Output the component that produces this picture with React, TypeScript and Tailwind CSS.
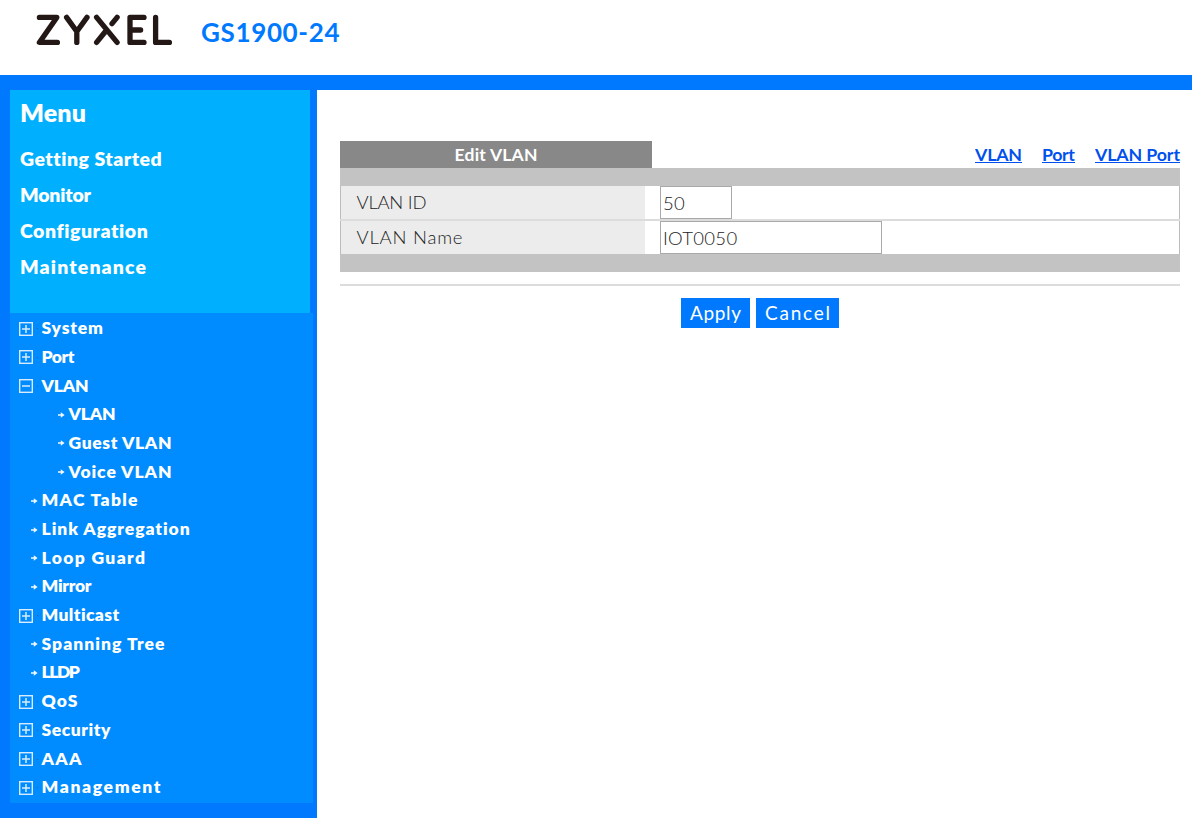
import { useLayoutEffect, useRef, useState } from "react";

type FitTextProps = { text: string; width: number; className?: string };

// Spreads the letters of a label evenly over the given width.
function FitText({ text, width, className = "" }: FitTextProps) {
  const ref = useRef<HTMLSpanElement>(null);
  const [spacing, setSpacing] = useState(0);
  useLayoutEffect(() => {
    const el = ref.current;
    if (!el) return;
    el.style.letterSpacing = "0px";
    const natural = el.getBoundingClientRect().width;
    const next = (width - natural) / Math.max(1, text.length - 1);
    el.style.letterSpacing = `${next}px`;
    setSpacing(next);
  }, [text, width]);
  return (
    <span className={`block shrink-0 whitespace-nowrap ${className}`} style={{ width }}>
      <span ref={ref} className="inline-block" style={{ letterSpacing: spacing }}>
        {text}
      </span>
    </span>
  );
}

function Logo() {
  return (
    <svg
      className="h-[44px] w-[150px]"
      viewBox="30 8 150 44"
      fill="none"
      stroke="#231815"
      strokeWidth="5.3"
      strokeLinecap="round"
      strokeLinejoin="round"
      role="img"
      aria-label="ZYXEL"
    >
      <path d="M39.4 17.4H56.8L39.4 42.4H57.4" />
      <path d="M66.6 17.4L76.8 31.5V42.4M87 17.4L76.8 31.5" />
      <path d="M96.6 17.4L117.1 42.4M96.6 42.4L105 32M117.1 17.4L112 23.6" />
      <path d="M144 17.4H130V42.4H144M130 30H140.6" />
      <path d="M155.6 17.4V42.4H169.4" />
    </svg>
  );
}

function Toggle({ open }: { open?: boolean }) {
  return (
    <svg className="size-[14px] shrink-0" viewBox="0 0 14 14" fill="none" stroke="#d6ecff">
      <rect x="0.7" y="0.7" width="12.6" height="12.6" strokeWidth="1.4" />
      <path d={open ? "M3 7H11" : "M3 7H11M7 3V11"} strokeWidth="1.5" />
    </svg>
  );
}

function Arrow() {
  return (
    <svg className="h-[6px] w-[7px] shrink-0" viewBox="0 0 7 6">
      <path d="M0 2.2H2.8V0.2L6.6 3L2.8 5.8V3.8H0Z" fill="#f0f8ff" />
    </svg>
  );
}

const sections = [
  { text: "Getting Started", width: 141 },
  { text: "Monitor", width: 71 },
  { text: "Configuration", width: 128 },
  { text: "Maintenance", width: 126 },
];

type Kind = "closed" | "open" | "leaf" | "sub";
const items: { text: string; width: number; kind: Kind }[] = [
  { text: "System", width: 61.5, kind: "closed" },
  { text: "Port", width: 33, kind: "closed" },
  { text: "VLAN", width: 47, kind: "open" },
  { text: "VLAN", width: 47, kind: "sub" },
  { text: "Guest VLAN", width: 103, kind: "sub" },
  { text: "Voice VLAN", width: 103, kind: "sub" },
  { text: "MAC Table", width: 96, kind: "leaf" },
  { text: "Link Aggregation", width: 148.5, kind: "leaf" },
  { text: "Loop Guard", width: 103.5, kind: "leaf" },
  { text: "Mirror", width: 50, kind: "leaf" },
  { text: "Multicast", width: 78, kind: "closed" },
  { text: "Spanning Tree", width: 123, kind: "leaf" },
  { text: "LLDP", width: 38.5, kind: "leaf" },
  { text: "QoS", width: 36, kind: "closed" },
  { text: "Security", width: 69, kind: "closed" },
  { text: "AAA", width: 40, kind: "closed" },
  { text: "Management", width: 119, kind: "closed" },
];

function TreeItem({ text, width, kind }: { text: string; width: number; kind: Kind }) {
  const branch = kind === "closed" || kind === "open";
  return (
    <li className="flex h-[28.7px] items-center">
      {branch ? (
        <span className="flex w-[31.5px] items-center gap-[4px] pl-[9px]">
          <Toggle open={kind === "open"} />
          <span className="size-px bg-[#2b68ad]" />
        </span>
      ) : (
        <span className={kind === "sub" ? "w-[58.5px] pl-[48px]" : "w-[31.5px] pl-[20.5px]"}>
          <Arrow />
        </span>
      )}
      <FitText text={text} width={width} className="h-[29px] text-[17.5px] leading-[28px] font-extrabold" />
    </li>
  );
}

const links = [
  { text: "VLAN", width: 47 },
  { text: "Port", width: 33 },
  { text: "VLAN Port", width: 85 },
];

export default function App() {
  return (
    <div className="flex h-[818px] w-[1192px] flex-col overflow-hidden bg-white font-['Century_Gothic','Lato',sans-serif]">
      <header className="flex h-[75px] shrink-0 items-start pt-[8px] pl-[30px]">
        <Logo />
        <FitText
          text="GS1900-24"
          width={138.5}
          className="ml-[21px] pt-[8px] text-[26px] leading-[32px] font-bold text-[#0079ff]"
        />
      </header>
      <div className="h-[15px] shrink-0 bg-[#0079ff]" />
      <div className="flex min-h-0 flex-1">
        <aside className="w-[317px] shrink-0 bg-[#0079ff] pl-[10px] text-white">
          <nav className="h-[223px] w-[300px] bg-[#00b0ff] pl-[10px]">
            <FitText text="Menu" width={66} className="h-[51px] pt-[7px] text-[25px] leading-[30px] font-extrabold" />
            {sections.map((s) => (
              <FitText key={s.text} {...s} className="h-9 text-[19.5px] leading-9 font-extrabold" />
            ))}
          </nav>
          <ul className="h-[490px] w-[303px] bg-[#008cff] pt-[1.4px]">
            {items.map((item, i) => (
              <TreeItem key={i} {...item} />
            ))}
          </ul>
        </aside>
        <main className="flex-1 pt-[51px] pr-[12px] pl-[23px]">
          <div className="flex h-[27px] justify-between">
            <h1 className="flex w-[312px] justify-center bg-[#888888] text-[17.5px] leading-[27px] font-bold text-white">
              <FitText text="Edit VLAN" width={83} />
            </h1>
            <nav className="flex gap-[20px] text-[17.8px] leading-[27px] font-bold text-[#0050ee]">
              {links.map((l) => (
                <a key={l.text} href="#" className="h-[24px]">
                  <span className="block h-[22px] border-b border-[#0050ee]">
                    <FitText {...l} />
                  </span>
                </a>
              ))}
            </nav>
          </div>
          <div className="bg-[#c3c3c3] py-[18px]">
            <div className="border-x border-[#bcbcbc] bg-white text-[18.5px] font-light text-[#222]">
              <div className="flex h-[33px]">
                <div className="w-[304px] bg-[#ececec] pl-[15.5px] leading-[33px]">
                  <FitText text="VLAN ID" width={70} />
                </div>
                <input
                  defaultValue="50"
                  className="ml-[15px] h-[33px] w-[72px] border border-[#a9a9a9] pl-[2px] tracking-[0.3px]"
                />
              </div>
              <div className="-mx-px h-[2px] bg-[#dcdcdc]" />
              <div className="flex h-[33px]">
                <div className="w-[304px] bg-[#ececec] pl-[15.5px] leading-[33px]">
                  <FitText text="VLAN Name" width={106} />
                </div>
                <input
                  defaultValue="IOT0050"
                  className="ml-[15px] h-[33px] w-[222px] border border-[#a9a9a9] pl-[2px] tracking-[0.3px]"
                />
              </div>
            </div>
          </div>
          <div className="mt-[12px] h-[2px] bg-[#dcdcdc]" />
          <div className="mt-[12px] flex justify-center gap-[6px] text-[19px] leading-[30px] text-white">
            <button className="flex h-[30px] w-[69px] justify-center bg-[#0079ff]">
              <FitText text="Apply" width={51} />
            </button>
            <button className="flex h-[30px] w-[83px] justify-center bg-[#0079ff]">
              <FitText text="Cancel" width={65} />
            </button>
          </div>
        </main>
      </div>
    </div>
  );
}
